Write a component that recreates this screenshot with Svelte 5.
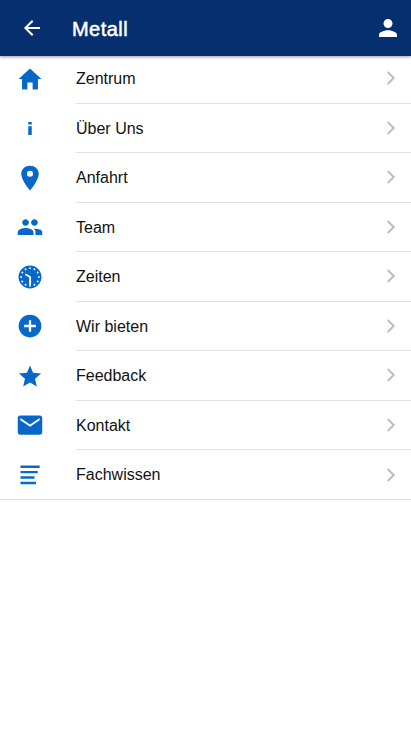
<script>
  const items = [
    { label: 'Zentrum', icon: 'home' },
    { label: 'Über Uns', icon: 'info' },
    { label: 'Anfahrt', icon: 'pin' },
    { label: 'Team', icon: 'people' },
    { label: 'Zeiten', icon: 'clock' },
    { label: 'Wir bieten', icon: 'add' },
    { label: 'Feedback', icon: 'star' },
    { label: 'Kontakt', icon: 'mail' },
    { label: 'Fachwissen', icon: 'list' }
  ];
  const paths = {
    home: 'M208 448V320h96v128h97.6V256H464L256 64 48 256h62.4v192z',
    info: 'M224 144h64v50h-64zM224 222h64v164h-64z',
    pin: 'M256 32C167.7 32 96 96.5 96 176c0 128 160 304 160 304s160-176 160-304c0-79.5-71.7-144-160-144zm0 202a56 56 0 1 1 0-112 56 56 0 0 1 0 112z',
    people: 'M337.454 232c33.599 0 61.092-27.002 61.092-60 0-32.997-27.493-60-61.092-60s-61.09 27.003-61.09 60c0 32.998 27.491 60 61.09 60zm-162.908 0c33.599 0 61.09-27.002 61.09-60 0-32.997-27.491-60-61.09-60s-61.092 27.003-61.092 60c0 32.998 27.493 60 61.092 60zm0 44C126.688 276 32 298.998 32 346v54h288v-54c0-47.002-97.599-70-145.454-70zm162.908 11.003c-6.105 0-10.325 0-17.454.997 23.426 17.003 36 28 36 58v54h124v-54c0-47.002-94.688-58.997-142.546-58.997z',
    clock: 'M256 46a210 210 0 1 0 0 420 210 210 0 0 0 0-420z',
    add: 'M256 48a208 208 0 1 0 0 416 208 208 0 0 0 0-416zm107 229h-86v86h-42v-86h-86v-42h86v-86h42v86h86z',
    star: 'M256 372.686L380.83 448l-33.021-142.066L458 210.409l-145.267-12.475L256 64l-56.743 133.934L54 210.409l110.192 95.525L131.161 448z',
    mail: 'M437.332 80H74.668C51.199 80 32 99.198 32 122.667v266.666C32 412.802 51.199 432 74.668 432h362.664C460.801 432 480 412.802 480 389.333V122.667C480 99.198 460.801 80 437.332 80zM432 170.667L256 288 80 170.667V128l176 117.333L432 128v42.667z',
    list: 'M82 82h350v44H82zM82 181h316v44H82zM82 280h256v44H82zM82 379h284v44H82z'
  };
  const ticks = Array.from({ length: 12 }, (_, i) => i * 30);
</script>

<div class="screen">
  <header>
    <svg class="back" viewBox="0 0 512 512"><path d="M427 234.625H167.296l119.702-119.702L256 85 85 256l171 171 29.922-29.924-118.626-119.701H427v-42.75z" /></svg>
    <h1>Metall</h1>
    <svg class="user" viewBox="0 0 512 512"><path d="M256 256c52.805 0 96-43.201 96-96s-43.195-96-96-96-96 43.201-96 96 43.195 96 96 96zm0 48c-63.598 0-192 32.402-192 96v48h384v-48c0-63.598-128.402-96-192-96z" /></svg>
  </header>
  <ul>
    {#each items as item}
      <li>
        <svg class="icon" viewBox="0 0 512 512">
          <path fill-rule="evenodd" d={paths[item.icon]} />
          {#if item.icon === 'clock'}
            {#each ticks as angle}
              <circle class="tick" cx="256" cy="94" r="17" transform="rotate({angle} 256 256)" />
            {/each}
            <path class="hands" d="M258 402V256l-88-50" />
          {/if}
        </svg>
        <div class="row">
          <span>{item.label}</span>
          <svg class="chevron" viewBox="0 0 10 16"><path d="M1.7 2 7.7 8l-6 6" /></svg>
        </div>
      </li>
    {/each}
  </ul>
</div>

<style>
  .screen {
    min-height: 731px;
    background: #fff;
    font-family: "Liberation Sans", Arial, sans-serif;
    overflow: hidden;
  }
  header {
    position: relative;
    display: flex;
    align-items: center;
    box-sizing: border-box;
    height: 56px;
    padding: 0 11px 0 20px;
    background: #052f6e;
    color: #fff;
    box-shadow: 0 1px 3px rgba(0, 0, 0, 0.4);
  }
  header svg {
    width: 24px;
    height: 24px;
    fill: #fff;
  }
  h1 {
    flex: 1;
    margin: 2px 0 0 28px;
    font-size: 20px;
    line-height: 24px;
    font-weight: 400;
    letter-spacing: 0.45px;
    -webkit-text-stroke: 0.5px #fff;
  }
  ul {
    list-style: none;
    margin: -2px 0 0;
    padding: 0;
    border-bottom: 1px solid #dedede;
  }
  li {
    display: flex;
    align-items: center;
    height: 49.5px;
    padding-left: 16px;
  }
  li:last-child {
    height: 49px;
  }
  .icon {
    width: 28px;
    height: 28px;
    flex: none;
    fill: #0868ca;
  }
  .icon .tick {
    fill: #fff;
  }
  .icon .hands {
    fill: none;
    stroke: #fff;
    stroke-width: 34;
  }
  .row {
    flex: 1;
    display: flex;
    align-items: center;
    justify-content: space-between;
    box-sizing: border-box;
    height: 100%;
    margin-left: 32px;
    padding-right: 15px;
    border-bottom: 1px solid #e2e2e2;
    font-size: 16px;
    color: #111;
  }
  .row span {
    padding-top: 2px;
  }
  li:last-child .row {
    border-bottom: 0;
  }
  li:last-child .row span {
    padding-top: 0;
  }
  .chevron {
    width: 10px;
    height: 16px;
    fill: none;
    stroke: #bdbdbd;
    stroke-width: 2;
  }
</style>
